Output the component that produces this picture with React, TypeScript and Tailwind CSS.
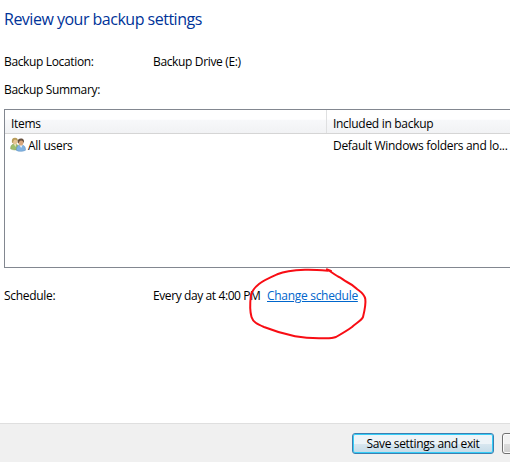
function UsersIcon() {
  return (
    <svg className="h-4 w-4 shrink-0" viewBox="0 0 16 16" fill="none">
      <path d="M.6 11.8C.5 8.5 2 7 4.7 7s4.2 1.4 4 5.2c-2 1-5.9 1-8.1-.4Z" fill="#9dbd6c" stroke="#7f9c55" strokeWidth=".5" />
      <path d="M3.8 7h2.4L5.5 10Z" fill="#e8edcc" />
      <ellipse cx="4.9" cy="4.4" rx="2.5" ry="3" fill="#e5c493" />
      <path d="M1.9 5.4C1.5 2.2 2.8.8 5 .8c2.2 0 3.3 1.5 2.8 4-.7-1.7-2.3-2.2-3.7-1.8C3.4 3.8 3 4.8 3 6.1Z" fill="#b79b58" />
      <path d="M6.5 13.4c-.2-4 1.4-5.4 4.5-5.4s4.6 1.5 4.5 5.2c-2.4 1.5-6.7 1.5-9 .2Z" fill="#80b2e2" stroke="#5d8fbf" strokeWidth=".5" />
      <path d="m9.5 8.1 1.6 3 1.5-3Z" fill="#eef6fc" />
      <ellipse cx="10.8" cy="5.5" rx="2.6" ry="3.1" fill="#d8a67c" />
      <path d="M7.8 5.9C7.2 2.8 8.6 1.4 11 1.4c2.4 0 3.7 1.8 2.7 4.8-.3-1.6-1.2-2.6-2.6-2.8-1.3.3-2 .8-2.3 2.5Z" fill="#66503f" />
    </svg>
  )
}

function ScheduleMark() {
  return (
    <svg
      className="pointer-events-none absolute -top-[21px] -left-5 h-[74px] w-[122px]"
      viewBox="247 267 122 74"
      fill="none"
      stroke="#f80d14"
      strokeWidth="2"
      strokeLinecap="round"
      strokeLinejoin="round"
    >
      <path d="M331 271 327 269.3 328 270.7C319 270 312 269.5 305 269.8C294 270.3 285 271 278 274C270 277.5 264 280 259 284C254 288 251.5 291 250.8 296C250 303 249.8 311 251.5 317C253 322 257 324 264 327C274 331 284 334 295 336.2C304 337.8 313 338.3 321 338.2C327 338.5 332 338.6 336 337C343 333 348 330 352 327C356 323 361 321 363 317C364.5 311 366 304 365.3 299C364.5 294 361 292 357 289C354 286 351 284 347 282C343 280 342 278 338 276.5C333 273.5 330 271 327 269.3" />
    </svg>
  )
}

export default function App() {
  return (
    <div className="flex h-[462px] w-[510px] flex-col overflow-hidden bg-white font-['Open_Sans','Noto_Sans',sans-serif] text-[12px] leading-4 tracking-[-0.3px] text-black">
      <main className="h-[423px] shrink-0 pl-1">
        <h1 className="pt-2 text-[16px] leading-[22px] tracking-[-0.5px] whitespace-nowrap text-[#003399]">
          Review your backup settings
        </h1>
        <div className="mt-6 flex tracking-[-0.35px] whitespace-nowrap">
          <div className="w-[149px]">Backup Location:</div>
          <div>Backup Drive (E:)</div>
        </div>
        <div className="mt-3 tracking-[-0.35px]">Backup Summary:</div>

        <div className="mt-[11px] h-[159px] w-[520px] border border-[#828790]">
          <div className="flex h-6 border-b border-[#d5d5d5] bg-linear-to-b from-white from-40% via-[#f7f8fa] via-45% to-[#f1f2f4] whitespace-nowrap">
            <div className="w-[322px] border-r border-[#dfe0e1] pt-1.5 pl-1.5">Items</div>
            <div className="pt-1.5 pl-1.5">Included in backup</div>
          </div>
          <div className="flex h-[22px] items-center whitespace-nowrap">
            <div className="flex w-[322px] items-center gap-0.5 pl-[5px]">
              <UsersIcon />
              <span className="pt-0.5">All users</span>
            </div>
            <div className="pt-0.5 pl-1.5">Default Windows folders and lo...</div>
          </div>
        </div>

        <div className="mt-5 flex whitespace-nowrap">
          <div className="w-[149px]">Schedule:</div>
          <div className="w-[114px] tracking-[-0.4px]">Every day at 4:00 PM</div>
          <div className="relative">
            <a href="#" className="text-[#0066cc] underline">
              Change schedule
            </a>
            <ScheduleMark />
          </div>
        </div>
      </main>

      <footer className="flex h-[39px] gap-2 border-t border-[#dfdfdf] bg-[#f0f0f0] pt-[9px] pl-[352px] whitespace-nowrap">
        <button className="h-[21px] w-[142px] shrink-0 rounded-[3px] border border-[#3c7fb1] bg-linear-to-b from-[#edf4f8] from-50% via-[#d9e8f0] via-50% to-[#c5dbe8] leading-[17px] tracking-[-0.35px] shadow-[inset_0_0_0_1px_#35cdf7]">
          Save settings and exit
        </button>
        <button aria-label="Cancel" className="h-[21px] w-[75px] shrink-0 rounded-[3px] border border-[#707070] bg-linear-to-b from-[#f2f2f2] from-50% via-[#dddddd] via-50% to-[#cfcfcf] shadow-[inset_0_0_0_1px_#fcfcfc]" />
      </footer>
    </div>
  )
}
